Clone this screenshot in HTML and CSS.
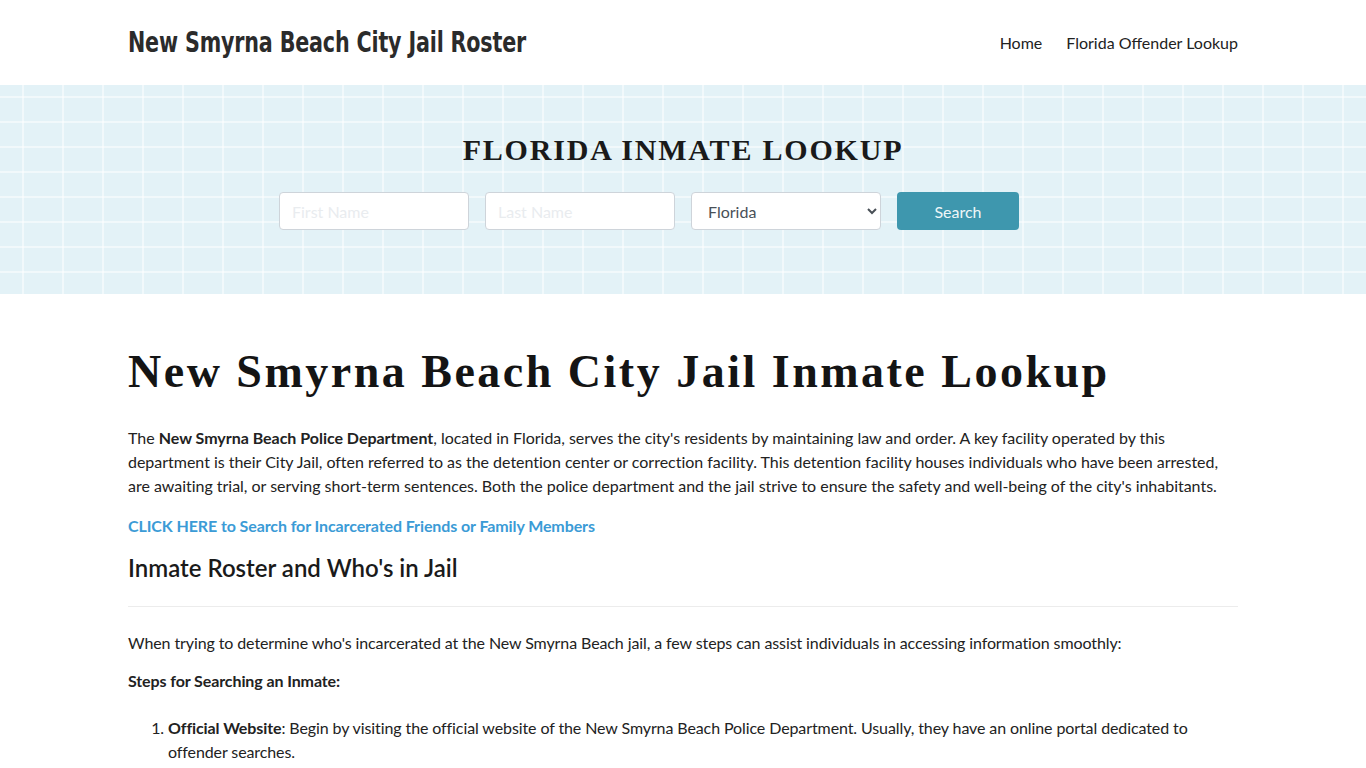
FILE: index.html
```html
<!DOCTYPE html>
<html lang="en">
<head>
<meta charset="utf-8">
<title>New Smyrna Beach City Jail Roster</title>
<link rel="stylesheet" href="styles.css">
</head>
<body>
<header class="site-header">
  <div class="container header-row">
    <a class="brand" href="#">New Smyrna Beach City Jail Roster</a>
    <nav class="nav">
      <a href="#">Home</a>
      <a href="#">Florida Offender Lookup</a>
    </nav>
  </div>
</header>
<section class="hero">
  <h2 class="hero-title">FLORIDA INMATE LOOKUP</h2>
  <form class="search-form">
    <input class="field" type="text" placeholder="First Name">
    <input class="field" type="text" placeholder="Last Name">
    <select class="field select">
      <option>Florida</option>
    </select>
    <button class="btn" type="button">Search</button>
  </form>
</section>
<main class="container content">
  <h1 class="page-title">New Smyrna Beach City Jail Inmate Lookup</h1>
  <p class="lead">The <strong>New Smyrna Beach Police Department</strong>, located in Florida, serves the city's residents by maintaining law and order. A key facility operated by this department is their City Jail, often referred to as the detention center or correction facility. This detention facility houses individuals who have been arrested, are awaiting trial, or serving short-term sentences. Both the police department and the jail strive to ensure the safety and well-being of the city's inhabitants.</p>
  <p class="cta"><a href="#">CLICK HERE to Search for Incarcerated Friends or Family Members</a></p>
  <h2 class="section-title">Inmate Roster and Who's in Jail</h2>
  <hr class="rule">
  <p class="intro">When trying to determine who's incarcerated at the New Smyrna Beach jail, a few steps can assist individuals in accessing information smoothly:</p>
  <p><strong>Steps for Searching an Inmate:</strong></p>
  <ol class="steps">
    <li><strong>Official Website</strong>: Begin by visiting the official website of the New Smyrna Beach Police Department. Usually, they have an online portal dedicated to offender searches.</li>
  </ol>
</main>
</body>
</html>
```

FILE: styles.css
```css
* { box-sizing: border-box; }
html, body { margin: 0; padding: 0; }
body {
  font-family: Lato, "Open Sans", sans-serif;
  font-size: 16px;
  line-height: 24px;
  color: #222;
  background: #fff;
}
.container {
  width: 1110px;
  margin: 0 auto;
}
.site-header { height: 85px; background: #fff; }
.header-row {
  height: 85px;
  display: flex;
  align-items: center;
  justify-content: space-between;
}
.brand {
  font-family: "DejaVu Sans Condensed", "DejaVu Sans", sans-serif;
  font-weight: bold;
  font-size: 28px;
  letter-spacing: -0.2px;
  color: #2b2b2b;
  text-decoration: none;
  transform: scaleX(0.82);
  transform-origin: left center;
  display: inline-block;
  white-space: nowrap;
}
.nav { display: flex; gap: 24px; }
.nav a {
  color: #222;
  text-decoration: none;
  font-size: 16px;
}
.hero {
  height: 209px;
  background-color: #e3f2f7;
  background-image:
    repeating-linear-gradient(90deg, transparent 0 22px, rgba(255,255,255,0.5) 22px 24px, transparent 24px 40px),
    repeating-linear-gradient(180deg, transparent 0 11px, rgba(255,255,255,0.5) 11px 13px, transparent 13px 25px);
  display: flex;
  flex-direction: column;
  align-items: center;
  padding-top: 48px;
}
.hero-title {
  margin: 0;
  font-family: "Liberation Serif", "DejaVu Serif", serif;
  font-weight: bold;
  font-size: 30px;
  line-height: 34px;
  letter-spacing: 1.8px;
  color: #1a1a1a;
}
.search-form {
  display: flex;
  gap: 16px;
  margin-top: 25px;
  margin-right: 68px;
}
.field {
  width: 190px;
  height: 38px;
  border: 1px solid #ced4da;
  border-radius: 4px;
  background: #fff;
  font-family: Lato, sans-serif;
  font-size: 16px;
  color: #495057;
  padding: 6px 12px;
}
.field::placeholder { color: #e9ecef; }
.select { padding-left: 12px; }
.btn {
  width: 122px;
  height: 38px;
  border: none;
  border-radius: 4px;
  background: #3e97ae;
  color: #eef6f8;
  font-family: Lato, sans-serif;
  font-size: 16px;
  cursor: pointer;
}
.content { padding-top: 52px; }
.page-title {
  margin: 0 0 28px;
  font-family: "Liberation Serif", "DejaVu Serif", serif;
  font-weight: bold;
  font-size: 46px;
  line-height: 52px;
  letter-spacing: 2.5px;
  color: #141414;
}
p { margin: 0 0 16px; letter-spacing: -0.1px; }
.lead { letter-spacing: -0.02px; }
.steps li { letter-spacing: -0.1px; }
strong { font-weight: bold; }
.cta { margin-bottom: 14px; }
.cta a {
  color: #3b9bd6;
  font-weight: bold;
  text-decoration: none;
}
.section-title {
  margin: 0;
  font-family: Lato, sans-serif;
  font-weight: 600;
  font-size: 24px;
  line-height: 32px;
  color: #1a1a1a;
}
.rule {
  border: 0;
  border-top: 1px solid #ececec;
  margin: 22px 0 24px;
}
.intro { margin-bottom: 14px; }
.steps { margin: 23px 0 0; padding-left: 40px; }
```
